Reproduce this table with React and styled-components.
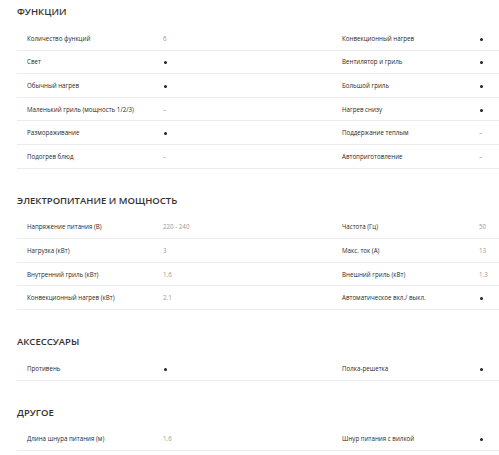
import React from 'react'
import styled, { createGlobalStyle } from 'styled-components'

const GlobalStyle = createGlobalStyle`
  html, body {
    margin: 0;
    padding: 0;
    background: #fff;
    overflow: hidden;
  }
  body {
    font-family: 'Open Sans', 'Liberation Sans', sans-serif;
    color: #333;
  }
`

const Page = styled.div`
  width: 632px;
  padding: 5px 0 0 17px;
`

const Section = styled.section`
  margin-bottom: 25px;
`

const Heading = styled.h2`
  margin: 0 0 8px;
  font-size: 9.5px;
  line-height: 14px;
  font-weight: 600;
  color: #333;
`

const Row = styled.div`
  display: grid;
  grid-template-columns: 136px 179px 137px 1fr;
  align-items: center;
  height: 22.6px;
  padding: 0 10px;
  border-bottom: 1px solid #ececec;
`

const Label = styled.span`
  font-size: 6.2px;
  color: #2a2a2a;
  white-space: nowrap;
`

const Value = styled.span`
  font-size: 6.2px;
  color: ${p => (p.$mark ? '#222' : '#999')};
  white-space: nowrap;
`

const Dot = styled.span`
  display: inline-block;
  width: 3px;
  height: 3px;
  border-radius: 50%;
  background: #222;
  margin-left: 1px;
`

const YES = 'yes'

const sections = [
  {
    title: 'ФУНКЦИИ',
    rows: [
      ['Количество функций', '6', 'Конвекционный нагрев', YES],
      ['Свет', YES, 'Вентилятор и гриль', YES],
      ['Обычный нагрев', YES, 'Большой гриль', YES],
      ['Маленький гриль (мощность 1/2/3)', '–', 'Нагрев снизу', YES],
      ['Размораживание', YES, 'Поддержание теплым', '–'],
      ['Подогрев блюд', '–', 'Автоприготовление', '–'],
    ],
  },
  {
    title: 'ЭЛЕКТРОПИТАНИЕ И МОЩНОСТЬ',
    rows: [
      ['Напряжение питания (В)', '220 - 240', 'Частота (Гц)', '50'],
      ['Нагрузка (кВт)', '3', 'Макс. ток (А)', '13'],
      ['Внутренний гриль (кВт)', '1.6', 'Внешний гриль (кВт)', '1.3'],
      ['Конвекционный нагрев (кВт)', '2.1', 'Автоматическое вкл./ выкл.', YES],
    ],
  },
  {
    title: 'АКСЕССУАРЫ',
    rows: [['Противень', YES, 'Полка-решетка', YES]],
  },
  {
    title: 'ДРУГОЕ',
    rows: [['Длина шнура питания (м)', '1.6', 'Шнур питания с вилкой', YES]],
  },
]

const Cell = ({ value }) =>
  value === YES ? (
    <Value $mark>
      <Dot />
    </Value>
  ) : (
    <Value>{value}</Value>
  )

const App = () => (
  <>
    <GlobalStyle />
    <Page>
      {sections.map(s => (
        <Section key={s.title}>
          <Heading>{s.title}</Heading>
          {s.rows.map(r => (
            <Row key={r[0]}>
              <Label>{r[0]}</Label>
              <Cell value={r[1]} />
              <Label>{r[2]}</Label>
              <Cell value={r[3]} />
            </Row>
          ))}
        </Section>
      ))}
    </Page>
  </>
)

export default App
